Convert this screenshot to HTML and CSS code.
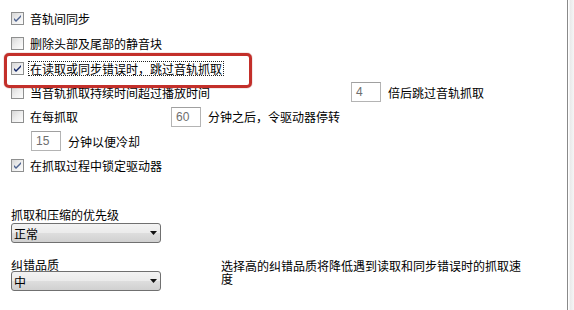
FILE: index.html
```html
<!DOCTYPE html>
<html lang="zh-CN">
<head>
<meta charset="utf-8">
<title>抓取选项</title>
<link rel="stylesheet" href="styles.css">
</head>
<body>
<div class="window">
  <div class="panel">
    <div class="options">
      <div class="row">
        <span class="cb"><svg class="tick soft" viewBox="0 0 11 11" width="11" height="11"><polygon points="2,5 4,7 9,2 9,4 4,9 2,7"/></svg></span>
        <span class="lbl">音轨间同步</span>
      </div>
      <div class="row">
        <span class="cb"></span>
        <span class="lbl">删除头部及尾部的静音块</span>
      </div>
      <div class="row">
        <span class="cb"><svg class="tick dark" viewBox="0 0 11 11" width="11" height="11"><polygon points="2,5 4,7 9,2 9,4 4,9 2,7"/></svg></span>
        <span class="lbl focus">在读取或同步错误时，跳过音轨抓取</span>
      </div>
      <div class="row">
        <span class="cb"></span>
        <span class="lbl w-long">当音轨抓取持续时间超过播放时间</span>
        <span class="num">4</span>
        <span class="after">倍后跳过音轨抓取</span>
      </div>
      <div class="row">
        <span class="cb"></span>
        <span class="lbl w-short">在每抓取</span>
        <span class="num">60</span>
        <span class="after">分钟之后，令驱动器停转</span>
      </div>
      <div class="row indent">
        <span class="num">15</span>
        <span class="after">分钟以便冷却</span>
      </div>
      <div class="row">
        <span class="cb"><svg class="tick soft" viewBox="0 0 11 11" width="11" height="11"><polygon points="2,5 4,7 9,2 9,4 4,9 2,7"/></svg></span>
        <span class="lbl">在抓取过程中锁定驱动器</span>
      </div>
    </div>
    <div class="bottom">
      <div class="plabel first">抓取和压缩的优先级</div>
      <div class="combo first-combo"><span>正常</span><svg class="arrow" viewBox="0 0 7 4" width="7" height="4"><polygon points="0,0 7,0 3.5,4"/></svg></div>
      <div class="plabel second">纠错品质</div>
      <div class="combo"><span>中</span><svg class="arrow" viewBox="0 0 7 4" width="7" height="4"><polygon points="0,0 7,0 3.5,4"/></svg></div>
      <div class="desc">选择高的纠错品质将降低遇到读取和同步错误时的抓取速度</div>
    </div>
    <div class="highlight"></div>
  </div>
  <div class="edge"></div>
</div>
</body>
</html>
```
FILE: styles.css
```css
html, body {
  margin: 0;
  padding: 0;
  background: #fff;
}
body {
  width: 574px;
  height: 310px;
  overflow: hidden;
  font-family: "Noto Sans CJK SC", "Liberation Sans", sans-serif;
  font-size: 12px;
  color: #000;
}
.window {
  display: flex;
  height: 310px;
}
.panel {
  position: relative;
  width: 567px;
  flex: none;
}
.edge {
  width: 6px;
  flex: none;
  border-left: 1px solid #8a8a8a;
  background: linear-gradient(to right, #fff 0, #fff 1px, #e9e9e9 2px, #f5f5f5 100%);
}
.options {
  display: grid;
  grid-template-rows: 25px 25px 24px 24px 25px 24px 24px;
  padding-top: 6px;
  padding-left: 11px;
}
.row {
  display: flex;
  align-items: center;
}
.cb {
  width: 11px;
  height: 11px;
  flex: none;
  display: flex;
  border: 1px solid #8e8f8f;
  background: linear-gradient(135deg, #d6d6d6 0%, #ececec 45%, #fdfdfd 100%);
}
.tick.soft { fill: #4f6490; }
.tick.dark { fill: #14286a; }
.lbl {
  margin-left: 4px;
  padding: 0 1px;
  border: 1px dotted transparent;
  line-height: 13px;
  white-space: nowrap;
}
.lbl.focus {
  border-color: #222;
}
.lbl.w-long { width: 315px; }
.lbl.w-short { width: 135px; }
.num {
  box-sizing: border-box;
  width: 30px;
  height: 20px;
  flex: none;
  margin-left: 4px;
  padding-left: 4px;
  border: 1px solid #b4b4b4;
  border-top-color: #a0a0a0;
  font-family: "Liberation Sans", sans-serif;
  font-size: 12px;
  line-height: 18px;
  color: #6e6e6e;
}
.indent .num { margin-left: 20px; }
.after {
  margin-left: 7px;
  white-space: nowrap;
  line-height: 13px;
}
.bottom {
  display: grid;
  grid-template-columns: 210px 310px;
  padding-left: 11px;
  margin-top: 31px;
}
.plabel {
  grid-column: 1;
  line-height: 13px;
  white-space: nowrap;
}
.plabel.second { margin-top: 15px; }
.combo {
  grid-column: 1;
  box-sizing: border-box;
  width: 150px;
  height: 20px;
  display: flex;
  align-items: center;
  justify-content: space-between;
  padding: 0 3px 0 2px;
  border: 1px solid #707070;
  border-radius: 3px;
  background: linear-gradient(#f3f3f3 0%, #ebebeb 48%, #dddddd 52%, #d0d0d0 100%);
  line-height: 13px;
}
.first-combo { margin-top: 2px; }
.arrow { fill: #111; }
.desc {
  grid-column: 2;
  grid-row: 3 / span 2;
  align-self: start;
  margin-top: 16px;
  width: 305px;
  line-height: 13px;
}
.highlight {
  position: absolute;
  left: 4px;
  top: 53px;
  width: 248px;
  height: 35px;
  box-sizing: border-box;
  border: 3px solid #c32f2a;
  border-radius: 5px;
  box-shadow: 0 0 1px #8a1c18;
}
```
